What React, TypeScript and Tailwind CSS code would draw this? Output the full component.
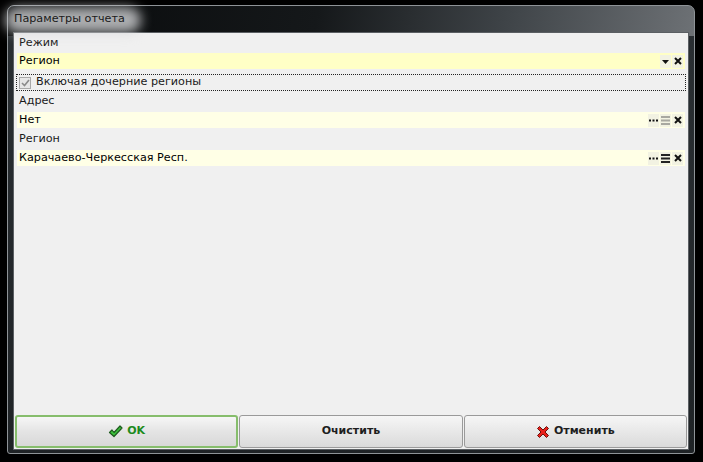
import React from "react";

const font = "font-['DejaVu_Sans',Tahoma,sans-serif]";

const DropIcon = () => (
  <svg width="7" height="5" viewBox="0 0 7 5">
    <path d="M0 1h7L3.5 5z" fill="#111" />
  </svg>
);

const CrossIcon = () => (
  <svg width="8" height="8" viewBox="0 0 8 8">
    <path d="M1 1l6 6M7 1L1 7" stroke="#111" strokeWidth="2" />
  </svg>
);

const DotsIcon = () => (
  <svg width="9" height="3" viewBox="0 0 9 3">
    <rect x="0" y="0.5" width="2" height="2" fill="#111" />
    <rect x="3.5" y="0.5" width="2" height="2" fill="#111" />
    <rect x="7" y="0.5" width="2" height="2" fill="#111" />
  </svg>
);

const ListIcon = ({ disabled }: { disabled?: boolean }) => (
  <svg width="9" height="9" viewBox="0 0 9 9">
    <g fill={disabled ? "#a8a8a0" : "#222"}>
      <rect x="0" y="0" width="9" height="2" />
      <rect x="0" y="3.5" width="9" height="2" />
      <rect x="0" y="7" width="9" height="2" />
    </g>
  </svg>
);

const FieldButton = ({ children }: { children: React.ReactNode }) => (
  <span className="flex h-[13px] w-[11px] items-center justify-center bg-[#f2f2e2]">{children}</span>
);

const Label = ({ text, h }: { text: string; h: string }) => (
  <div className={`flex items-center pl-[5px] text-[11.2px] text-[#1a1a1a] ${h}`}>{text}</div>
);

const Field = ({
  value,
  bg,
  buttons,
}: {
  value: string;
  bg: string;
  buttons: React.ReactNode;
}) => (
  <div className={`mx-[3px] flex h-[16px] items-center pl-[2px] pr-[2px] text-[11.2px] text-black ${bg}`}>
    <span className="flex-1 leading-none">{value}</span>
    <div className="flex gap-[1px]">{buttons}</div>
  </div>
);

const BigCheck = () => (
  <svg width="15" height="13" viewBox="0 0 15 13">
    <path
      d="M1.5 7.5L4 5l2 2.5L12 1l2 2L6 11.5z"
      fill="#3cc23c"
      stroke="#1d5a1d"
      strokeWidth="1.2"
      strokeLinejoin="round"
    />
  </svg>
);

const BigCross = () => (
  <svg width="14" height="14" viewBox="0 0 14 14">
    <path
      d="M1.5 3.5l2-2L7 5l3.5-3.5 2 2L9 7l3.5 3.5-2 2L7 9l-3.5 3.5-2-2L5 7z"
      fill="#e8201a"
      stroke="#6a0f0a"
      strokeWidth="1"
      strokeLinejoin="round"
    />
  </svg>
);

const App = () => {
  return (
    <div className={`h-[462px] w-[703px] overflow-hidden bg-black pl-[7px] pt-[5px] ${font}`}>
      <div className="flex h-[449px] w-[688px] flex-col rounded-t-[7px] rounded-b-[3px] border border-[#8e9397] px-[5px] pb-[3px] [background:linear-gradient(100deg,#07090a_0%,#15181a_45%,#3e4347_72%,#6d7175_100%)_top/100%_30px_no-repeat,linear-gradient(to_bottom,#2a2f33,#1f2326)]">
        <div className="relative flex h-[26px] items-center pl-[1px]">
          <div className="absolute left-[-8px] top-[1px] h-[26px] w-[136px] rounded-full bg-[#d4d6d8]/80 blur-[6px]" />
          <span className="relative text-[11.2px] text-[#1a1a1a]">Параметры отчета</span>
        </div>
        <div className="flex flex-1 flex-col border border-[#5b5f63] bg-[#f0f0f0]">
          <Label text="Режим" h="h-[20px]" />
          <Field
            value="Регион"
            bg="bg-[#ffffc6]"
            buttons={
              <>
                <FieldButton>
                  <DropIcon />
                </FieldButton>
                <FieldButton>
                  <CrossIcon />
                </FieldButton>
              </>
            }
          />
          <div className="mx-[2px] mt-[5px] flex h-[17px] items-center border border-dotted border-[#222] pl-[2px] text-[11.2px] text-[#1a1a1a]">
            <span className="mr-[5px] flex h-[12px] w-[12px] items-center justify-center border border-[#a9a9a9] bg-[#e6e6e6]">
              <svg width="9" height="8" viewBox="0 0 9 8">
                <path d="M1 4l2.5 2.5L8 1" stroke="#8a8a8a" strokeWidth="1.6" fill="none" />
              </svg>
            </span>
            Включая дочерние регионы
          </div>
          <Label text="Адрес" h="h-[21px]" />
          <Field
            value="Нет"
            bg="bg-[#ffffe6]"
            buttons={
              <>
                <FieldButton>
                  <DotsIcon />
                </FieldButton>
                <FieldButton>
                  <ListIcon disabled />
                </FieldButton>
                <FieldButton>
                  <CrossIcon />
                </FieldButton>
              </>
            }
          />
          <Label text="Регион" h="h-[22px]" />
          <Field
            value="Карачаево-Черкесская Респ."
            bg="bg-[#ffffe6]"
            buttons={
              <>
                <FieldButton>
                  <DotsIcon />
                </FieldButton>
                <FieldButton>
                  <ListIcon />
                </FieldButton>
                <FieldButton>
                  <CrossIcon />
                </FieldButton>
              </>
            }
          />
          <div className="flex-1" />
          <div className="grid grid-cols-3 gap-[1px] px-[1px] pb-[1px]">
            <button className="flex h-[33px] items-center justify-center gap-[4px] rounded-[3px] border-2 border-[#86bd6c] bg-[linear-gradient(to_bottom,#f6f6f6,#e4e4e4_50%,#d8d8d8)] text-[11px] font-bold text-[#1c8a1c]">
              <BigCheck />
              OK
            </button>
            <button className="flex h-[33px] items-center justify-center rounded-[3px] border border-[#9a9a9a] bg-[linear-gradient(to_bottom,#f6f6f6,#e8e8e8_50%,#dadada)] text-[11px] font-bold text-[#1e1e1e]">
              Очистить
            </button>
            <button className="flex h-[33px] items-center justify-center gap-[4px] rounded-[3px] border border-[#9a9a9a] bg-[linear-gradient(to_bottom,#f6f6f6,#e8e8e8_50%,#dadada)] text-[11px] font-bold text-[#1e1e1e]">
              <BigCross />
              Отменить
            </button>
          </div>
        </div>
      </div>
    </div>
  );
};

export default App;
